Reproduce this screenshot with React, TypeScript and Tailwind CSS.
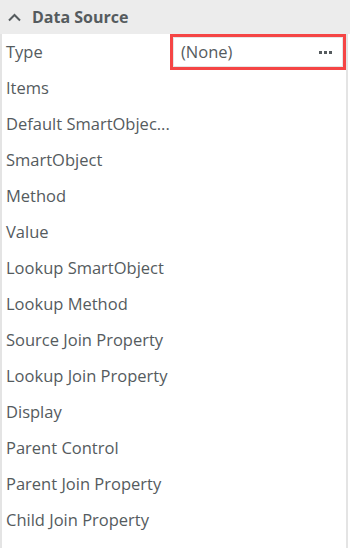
import React from "react";

const rows = [
  "Items",
  "Default SmartObjec...",
  "SmartObject",
  "Method",
  "Value",
  "Lookup SmartObject",
  "Lookup Method",
  "Source Join Property",
  "Lookup Join Property",
  "Display",
  "Parent Control",
  "Parent Join Property",
  "Child Join Property",
];

export default function App() {
  return (
    <div
      className="w-[350px] h-[548px] bg-white flex flex-col overflow-hidden text-[#555b5e]"
      style={{ fontFamily: '"Open Sans", sans-serif' }}
    >
      <div className="h-[34px] shrink-0 bg-[#ececec] flex items-center pl-[7px]">
        <svg width="15" height="15" viewBox="0 0 15 15" className="mr-[10px]">
          <path d="M2 10.5 L7.5 5 L13 10.5" fill="none" stroke="#555b5e" strokeWidth="2" />
        </svg>
        <span className="text-[16px] font-bold">Data Source</span>
      </div>
      <div className="w-[348px] flex-1 border-l-2 border-r-2 border-[#e4e4e4] flex flex-col">
        <div className="h-[36px] flex">
          <div className="w-[168px] pl-[4px] flex items-center text-[16.5px]">Type</div>
          <div className="w-[176px] border-[3px] border-[#f54545] flex">
            <div className="flex-1 border border-[#e6e6e6] flex items-center justify-between pl-[7px] pr-[10px]">
              <span className="text-[16.5px]">(None)</span>
              <span className="flex gap-[2px] items-center">
                <span className="w-[3px] h-[3px] bg-[#555b5e]" />
                <span className="w-[3px] h-[3px] bg-[#555b5e]" />
                <span className="w-[3px] h-[3px] bg-[#555b5e]" />
              </span>
            </div>
          </div>
        </div>
        {rows.map((r) => (
          <div key={r} className="h-[36px] flex">
            <div className="w-[168px] pl-[4px] flex items-center text-[16.5px] overflow-hidden">
              <span className="whitespace-nowrap">{r}</span>
            </div>
            <div className="flex-1" />
          </div>
        ))}
      </div>
    </div>
  );
}
